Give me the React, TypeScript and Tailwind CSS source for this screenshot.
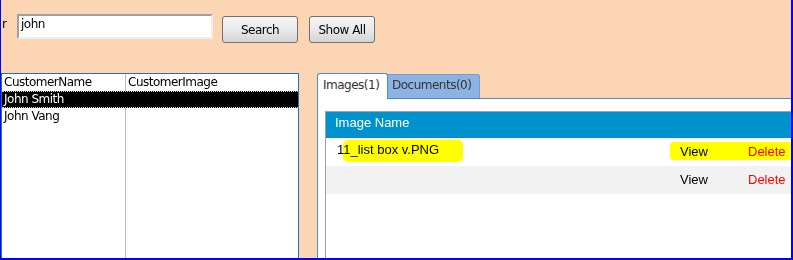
export default function App() {
  const rows = [
    { name: 'John Smith', selected: true },
    { name: 'John Vang', selected: false },
  ];

  return (
    <div className="relative w-[793px] h-[260px] overflow-hidden bg-[#fcd5b4] border-l border-r-2 border-b-2 border-[#0000ff] font-['DejaVu_Sans',sans-serif] text-[12px] tracking-[-0.5px] text-black">
      {/* search bar */}
      <div className="flex items-start pt-[14px] h-[43px]">
        <span className="w-[16px] pl-[1px] mt-[2px] leading-[17px]">r</span>
        <div className="w-[196px] h-[25px] bg-white border-2 border-t-[#a0a0a0] border-l-[#a0a0a0] border-r-[#eeeeee] border-b-[#eeeeee] pl-[2px] leading-[17px]">
          john
        </div>
        <button className="ml-[9px] mt-[2px] w-[76px] h-[27px] rounded-[3px] border border-[#707070] bg-linear-to-b from-[#f4f4f4] via-[#eaeaea] to-[#d4d4d4] text-[12px] leading-none">
          Search
        </button>
        <button className="ml-[11px] mt-[2px] w-[66px] h-[27px] rounded-[3px] border border-[#707070] bg-linear-to-b from-[#f4f4f4] via-[#eaeaea] to-[#d4d4d4] text-[12px] leading-none">
          Show All
        </button>
      </div>

      <div className="flex mt-[30px] h-[190px]">
        {/* customer grid */}
        <div className="w-[298px] h-full flex flex-col bg-white border border-[#1f6fc0] shrink-0">
          <div className="flex h-[17px] leading-[17px]">
            <div className="w-[124px] pl-[2px] border-r border-[#bcbcbc]">CustomerName</div>
            <div className="flex-1 pl-[2px]">CustomerImage</div>
          </div>
          {rows.map((r) =>
            r.selected ? (
              <div key={r.name} className="flex h-[17px] leading-[15px] bg-black text-white border-y border-dotted border-[#d0d0d0]">
                <div className="w-[124px] pl-[2px] border-r border-black">{r.name}</div>
                <div className="flex-1" />
              </div>
            ) : (
              <div key={r.name} className="flex h-[17px] leading-[17px]">
                <div className="w-[124px] pl-[2px] border-r border-[#bcbcbc]">{r.name}</div>
                <div className="flex-1" />
              </div>
            )
          )}
          <div className="flex flex-1">
            <div className="w-[124px] border-r border-[#bcbcbc]" />
          </div>
        </div>

        {/* attachments tabs */}
        <div className="ml-[18px] flex-1 flex flex-col min-w-0">
          <div className="flex items-end h-[25px]">
            <div className="relative z-10 -mb-px w-[71px] h-[26px] bg-white border border-b-0 border-[#4a8bc9] rounded-t-[3px] pl-[5px] pt-[3px] leading-[17px] text-[#333333]">
              Images(1)
            </div>
            <div className="w-[92px] h-[24px] bg-[#8db3e2] border border-b-0 border-l-0 border-[#6d9fd6] rounded-tr-[3px] pl-[4px] pt-[2px] leading-[17px] text-[#333333]">
              Documents(0)
            </div>
          </div>
          <div className="flex-1 bg-white border-l border-t border-[#4a8bc9] pl-[7px] pt-[12px]">
            <div className="w-[480px] h-[200px] border border-[#a0a0a0] font-['Liberation_Sans',Arial,sans-serif] text-[13px] tracking-normal">
              <div className="h-[26px] bg-[#0092cf] text-white pl-[9px] pt-[3px] leading-[15px]">Image Name</div>
              <div className="flex h-[28px] bg-white leading-[15px]">
                <div className="w-[354px] pl-[11px] pt-[4px]">11_list box v.PNG</div>
                <div className="w-[68px] pt-[6px]">View</div>
                <div className="pt-[6px] text-[#ff0000]">Delete</div>
              </div>
              <div className="flex h-[28px] bg-[#f2f2f2] leading-[15px]">
                <div className="w-[354px]" />
                <div className="w-[68px] pt-[6px]">View</div>
                <div className="pt-[6px] text-[#ff0000]">Delete</div>
              </div>
            </div>
          </div>
        </div>
      </div>

      {/* marker highlights */}
      <div className="absolute left-[342px] top-[140px] w-[120px] h-[22px] rounded-[5px] bg-[#ffff00] mix-blend-multiply" />
      <div className="absolute left-[669px] top-[142px] w-[130px] h-[18px] rounded-[4px] bg-[#ffff00] mix-blend-multiply" />
    </div>
  );
}
